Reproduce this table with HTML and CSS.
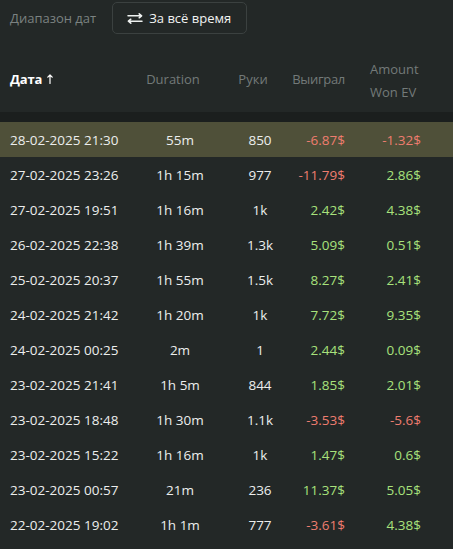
FILE: index.html
```html
<!DOCTYPE html>
<html lang="ru">
<head>
<meta charset="utf-8">
<link rel="stylesheet" href="styles.css">
</head>
<body>
<div class="page">
  <div class="toolbar">
    <span class="label">Диапазон дат</span>
    <button class="range-btn">
      <svg class="swap" width="16" height="11" viewBox="0 0 16 11" fill="none" stroke="#eef1f0" stroke-width="1.5" stroke-linecap="round" stroke-linejoin="round">
        <path d="M1 2.8H14.6M12.2 0.8L14.6 2.8L12.2 4.8"/>
        <path d="M15 8.2H1.4M3.8 6.2L1.4 8.2L3.8 10.2"/>
      </svg>
      <span>За всё время</span>
    </button>
  </div>
  <div class="grid thead">
    <div class="th th-date">Дата<svg class="sort" width="6" height="10" viewBox="0 0 6 10" fill="none" stroke="#ffffff" stroke-width="1.2" stroke-linecap="round" stroke-linejoin="round"><path d="M3 9.5V1M0.8 3.2L3 1L5.2 3.2"/></svg></div>
    <div class="th th-center th-dur">Duration</div>
    <div class="th th-center th-hands">Руки</div>
    <div class="th th-end">Выиграл</div>
    <div class="th th-ev">Amount<br>Won EV</div>
  </div>
  <div class="strip"></div>
  <div class="tbody">
    <div class="grid row active"><div class="c-date">28-02-2025 21:30</div><div class="c-center">55m</div><div class="c-hands">850</div><div class="c-end neg">-6.87$</div><div class="c-end neg">-1.32$</div></div>
    <div class="grid row"><div class="c-date">27-02-2025 23:26</div><div class="c-center">1h 15m</div><div class="c-hands">977</div><div class="c-end neg">-11.79$</div><div class="c-end pos">2.86$</div></div>
    <div class="grid row"><div class="c-date">27-02-2025 19:51</div><div class="c-center">1h 16m</div><div class="c-hands">1k</div><div class="c-end pos">2.42$</div><div class="c-end pos">4.38$</div></div>
    <div class="grid row"><div class="c-date">26-02-2025 22:38</div><div class="c-center">1h 39m</div><div class="c-hands">1.3k</div><div class="c-end pos">5.09$</div><div class="c-end pos">0.51$</div></div>
    <div class="grid row"><div class="c-date">25-02-2025 20:37</div><div class="c-center">1h 55m</div><div class="c-hands">1.5k</div><div class="c-end pos">8.27$</div><div class="c-end pos">2.41$</div></div>
    <div class="grid row"><div class="c-date">24-02-2025 21:42</div><div class="c-center">1h 20m</div><div class="c-hands">1k</div><div class="c-end pos">7.72$</div><div class="c-end pos">9.35$</div></div>
    <div class="grid row"><div class="c-date">24-02-2025 00:25</div><div class="c-center">2m</div><div class="c-hands">1</div><div class="c-end pos">2.44$</div><div class="c-end pos">0.09$</div></div>
    <div class="grid row"><div class="c-date">23-02-2025 21:41</div><div class="c-center">1h 5m</div><div class="c-hands">844</div><div class="c-end pos">1.85$</div><div class="c-end pos">2.01$</div></div>
    <div class="grid row"><div class="c-date">23-02-2025 18:48</div><div class="c-center">1h 30m</div><div class="c-hands">1.1k</div><div class="c-end neg">-3.53$</div><div class="c-end neg">-5.6$</div></div>
    <div class="grid row"><div class="c-date">23-02-2025 15:22</div><div class="c-center">1h 16m</div><div class="c-hands">1k</div><div class="c-end pos">1.47$</div><div class="c-end pos">0.6$</div></div>
    <div class="grid row"><div class="c-date">23-02-2025 00:57</div><div class="c-center">21m</div><div class="c-hands">236</div><div class="c-end pos">11.37$</div><div class="c-end pos">5.05$</div></div>
    <div class="grid row"><div class="c-date">22-02-2025 19:02</div><div class="c-center">1h 1m</div><div class="c-hands">777</div><div class="c-end neg">-3.61$</div><div class="c-end pos">4.38$</div></div>
  </div>
</div>
</body>
</html>
```

FILE: styles.css
```css
html, body {
  margin: 0;
  padding: 0;
  background: #232827;
}
body {
  font-family: "Open Sans", "Noto Sans", sans-serif;
  color: #e9ecea;
  width: 453px;
  height: 549px;
  overflow: hidden;
}
.page {
  display: flex;
  flex-direction: column;
}
.toolbar {
  display: flex;
  align-items: center;
  gap: 16px;
  padding: 2px 10px 0 10px;
  height: 32px;
}
.label {
  font-size: 13px;
  color: #7b8281;
}
.range-btn {
  display: flex;
  align-items: center;
  gap: 6px;
  height: 32px;
  padding: 0 15px 0 14px;
  background: #232827;
  border: 1px solid #3b4140;
  border-radius: 5px;
  color: #f1f3f2;
  font-family: inherit;
  font-size: 13px;
}
.swap {
  display: block;
}
.grid {
  display: grid;
  grid-template-columns: 140px 80px 80px 45px 76px 1fr;
  align-items: center;
}
.thead {
  height: 66px;
  padding-top: 12px;
  font-size: 13px;
  color: #737a79;
}
.th-date {
  display: flex;
  align-items: center;
  gap: 5px;
  padding-left: 10px;
  color: #ffffff;
  font-weight: 700;
  letter-spacing: -0.2px;
}
.sort {
  display: block;
}
.th-center {
  justify-self: center;
  white-space: nowrap;
}
.th-dur {
  margin-right: 14px;
}
.th-hands {
  margin-right: 14px;
}
.th-end {
  justify-self: end;
  white-space: nowrap;
  letter-spacing: -0.3px;
}
.th-ev {
  justify-self: start;
  margin-left: 25px;
  margin-top: 3px;
  line-height: 23px;
  white-space: nowrap;
}
.strip {
  height: 10px;
  background: #1b1f1e;
}
.row {
  height: 35px;
  font-size: 13.5px;
  font-weight: 500;
  color: #eceeed;
}
.row.active {
  background: #4f5039;
}
.row > div {
  white-space: nowrap;
}
.c-date {
  padding-left: 10px;
}
.c-center, .c-hands {
  justify-self: center;
}
.c-end {
  justify-self: end;
}
.neg {
  color: #ee7d6f;
}
.pos {
  color: #a8e27c;
}
```
